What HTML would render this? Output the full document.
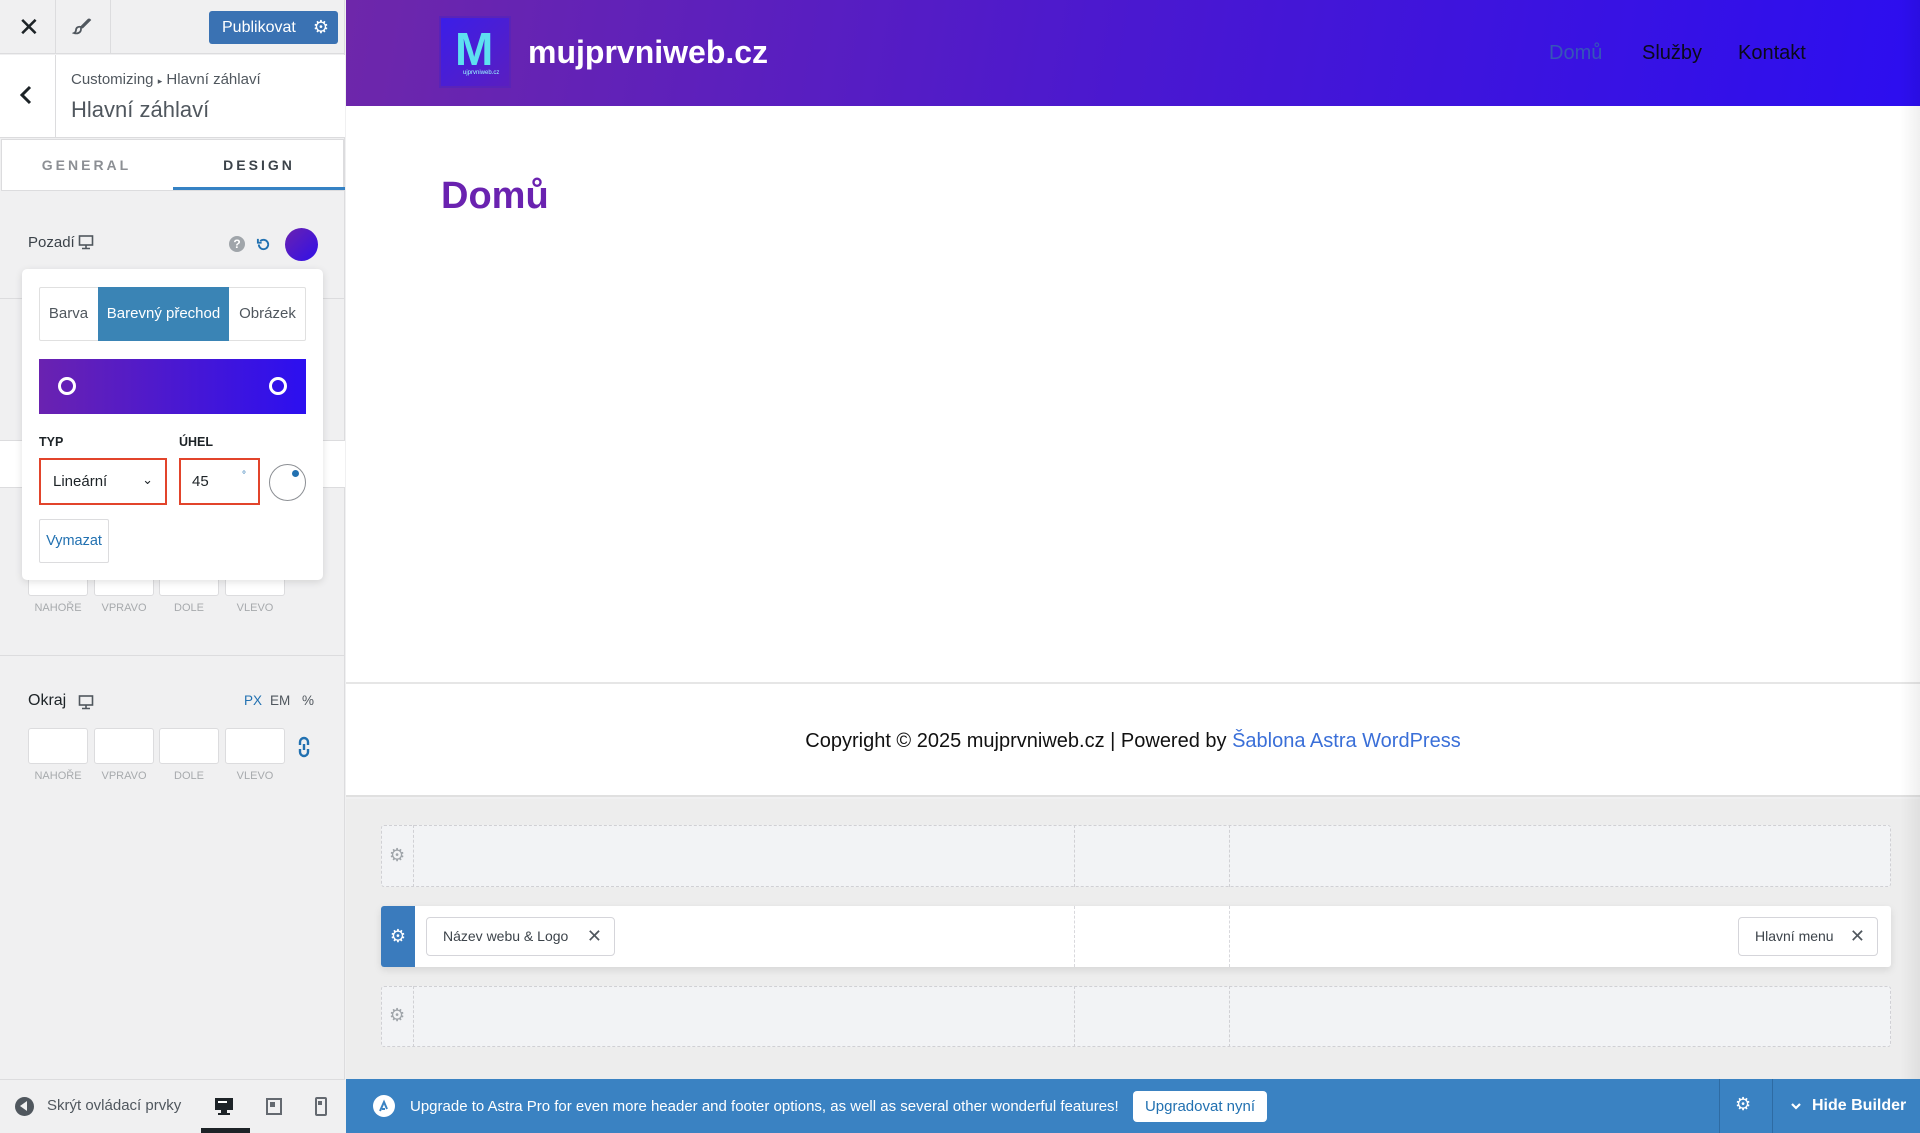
<!DOCTYPE html>
<html><head><meta charset="utf-8"><style>
*{box-sizing:border-box;margin:0;padding:0}
body{width:1920px;height:1133px;overflow:hidden;font-family:"Liberation Sans",sans-serif;background:#f0f0f1;position:relative;color:#1d2327}
.a{position:absolute}
.sb{left:0;top:0;width:345px;height:1133px;background:#f0f0f1;border-right:1px solid #dcdcde}
.inp{background:#fff;border:1px solid #dcdcde;border-radius:3px}
.lbl{font-size:11px;color:#a7aaad;text-align:center}
.row{border:1px dashed #d0d0d4;background:#f2f3f5;border-radius:3px}
.gear{color:#a0a5aa;font-size:18px}
</style></head><body>
<div class="a sb">
 <div class="a" style="left:0;top:0;width:345px;height:54px;border-bottom:1px solid #dcdcde"></div>
 <div class="a" style="left:55px;top:0;width:1px;height:54px;background:#dcdcde"></div>
 <div class="a" style="left:110px;top:0;width:1px;height:54px;background:#dcdcde"></div>
 <div class="a" style="left:18px;top:12px;font-size:26px;color:#1d2327">✕</div>
 <svg class="a" style="left:72px;top:16px" width="20" height="20" viewBox="0 0 20 20"><path d="M17 3 L9 11 M9 11 C6 10 4 12 4 14 C4 16 2 17 2 17 C5 18 9 17 9 13 Z M17 3 L18 4 L10 12" fill="none" stroke="#50575e" stroke-width="1.8"/></svg>
 <div class="a" style="left:209px;top:11px;width:129px;height:33px;background:#3a72b3;border-radius:3px;color:#fff;font-size:16px;line-height:33px;padding-left:13px">Publikovat<span style="position:absolute;right:9px;top:0;font-size:18px">⚙</span></div>
 <div class="a" style="left:0;top:55px;width:345px;height:83px;background:#fff;border-bottom:1px solid #dcdcde"></div>
 <div class="a" style="left:55px;top:55px;width:1px;height:83px;background:#dcdcde"></div>
 <svg class="a" style="left:19px;top:85px" width="14" height="20" viewBox="0 0 14 20"><path d="M11 2 L3 10 L11 18" fill="none" stroke="#1d2327" stroke-width="3"/></svg>
 <div class="a" style="left:71px;top:71px;font-size:15px;color:#50575e">Customizing <span style="font-size:9px">▸</span> Hlavní záhlaví</div>
 <div class="a" style="left:71px;top:97px;font-size:22px;color:#50575e">Hlavní záhlaví</div>
 <div class="a" style="left:1px;top:139px;width:343px;height:52px;background:#fff;border:1px solid #dcdcde"></div>
 <div class="a" style="left:0;top:157px;width:173px;text-align:center;font-size:14px;letter-spacing:3px;color:#8c8f94;font-weight:bold">GENERAL</div>
 <div class="a" style="left:173px;top:157px;width:172px;text-align:center;font-size:14px;letter-spacing:3px;color:#3c434a;font-weight:bold">DESIGN</div>
 <div class="a" style="left:173px;top:187px;width:172px;height:3px;background:#3582c4"></div>
 <div class="a" style="left:28px;top:234px;font-size:15px;color:#3c434a">Pozadí</div>
 <svg class="a" style="left:78px;top:234px" width="16" height="16" viewBox="0 0 16 16"><rect x="1.5" y="2" width="13" height="9" fill="none" stroke="#50575e" stroke-width="1.6"/><path d="M8 11v3M4 14.5h8" stroke="#50575e" stroke-width="1.6"/></svg>
 <div class="a" style="left:229px;top:236px;width:16px;height:16px;border-radius:50%;background:#a0a5aa;color:#fff;font-size:12px;font-weight:bold;text-align:center;line-height:16px">?</div>
 <svg class="a" style="left:256px;top:237px" width="15" height="15" viewBox="0 0 16 16"><path d="M3 8a5 5 0 1 0 1.5-3.6" fill="none" stroke="#2271b1" stroke-width="2"/><path d="M2 2v4h4" fill="none" stroke="#2271b1" stroke-width="2"/></svg>
 <div class="a" style="left:285px;top:228px;width:33px;height:33px;border-radius:50%;background:linear-gradient(135deg,#6a22b0,#3010e8)"></div>
 <div class="a" style="left:0;top:298px;width:345px;height:1px;background:#dcdcde"></div>
 <div class="a" style="left:0;top:440px;width:345px;height:48px;background:#fff;border-top:1px solid #dcdcde;border-bottom:1px solid #dcdcde"></div>
 <div class="a inp" style="left:28px;top:560px;width:60px;height:36px"></div>
 <div class="a inp" style="left:94px;top:560px;width:60px;height:36px"></div>
 <div class="a inp" style="left:159px;top:560px;width:60px;height:36px"></div>
 <div class="a inp" style="left:225px;top:560px;width:60px;height:36px"></div>
 <div class="a lbl" style="left:28px;top:602px;width:60px">NAHOŘE</div>
 <div class="a lbl" style="left:94px;top:602px;width:60px">VPRAVO</div>
 <div class="a lbl" style="left:159px;top:602px;width:60px">DOLE</div>
 <div class="a lbl" style="left:225px;top:602px;width:60px">VLEVO</div>
 <div class="a" style="left:0;top:655px;width:345px;height:1px;background:#dcdcde"></div>
 <div class="a" style="left:28px;top:692px;font-size:16px;color:#1d2327">Okraj</div>
 <svg class="a" style="left:78px;top:694px" width="16" height="16" viewBox="0 0 16 16"><rect x="1.5" y="2" width="13" height="9" fill="none" stroke="#50575e" stroke-width="1.6"/><path d="M8 11v3M4 14.5h8" stroke="#50575e" stroke-width="1.6"/></svg>
 <div class="a" style="left:244px;top:693px;font-size:13.5px;color:#2271b1">PX</div>
 <div class="a" style="left:270px;top:693px;font-size:13.5px;color:#50575e">EM</div>
 <div class="a" style="left:302px;top:693px;font-size:13.5px;color:#50575e">%</div>
 <div class="a inp" style="left:28px;top:728px;width:60px;height:36px"></div>
 <div class="a inp" style="left:94px;top:728px;width:60px;height:36px"></div>
 <div class="a inp" style="left:159px;top:728px;width:60px;height:36px"></div>
 <div class="a inp" style="left:225px;top:728px;width:60px;height:36px"></div>
 <svg class="a" style="left:297px;top:736px" width="14" height="22" viewBox="0 0 14 22"><path d="M3 9V6a4 4 0 0 1 8 0v3M3 13v3a4 4 0 0 0 8 0v-3M7 8v6" fill="none" stroke="#2271b1" stroke-width="2.4"/></svg>
 <div class="a lbl" style="left:28px;top:770px;width:60px">NAHOŘE</div>
 <div class="a lbl" style="left:94px;top:770px;width:60px">VPRAVO</div>
 <div class="a lbl" style="left:159px;top:770px;width:60px">DOLE</div>
 <div class="a lbl" style="left:225px;top:770px;width:60px">VLEVO</div>
 <div class="a" style="left:22px;top:269px;width:301px;height:311px;background:#fff;border-radius:5px;box-shadow:0 2px 8px rgba(0,0,0,.12)">
  <div class="a" style="left:17px;top:18px;width:267px;height:54px;border:1px solid #e0e0e0;border-radius:2px"></div>
  <div class="a" style="left:17px;top:18px;width:59px;height:54px;text-align:center;line-height:54px;font-size:15px;color:#50575e">Barva</div>
  <div class="a" style="left:76px;top:18px;width:131px;height:54px;background:#3a84b5;text-align:center;line-height:54px;font-size:15px;color:#fff">Barevný přechod</div>
  <div class="a" style="left:207px;top:18px;width:77px;height:54px;text-align:center;line-height:54px;font-size:15px;color:#50575e">Obrázek</div>
  <div class="a" style="left:17px;top:90px;width:267px;height:55px;background:linear-gradient(90deg,#6a22b0,#2c0ff0)"></div>
  <div class="a" style="left:36px;top:108px;width:18px;height:18px;border:3px solid #fff;border-radius:50%"></div>
  <div class="a" style="left:247px;top:108px;width:18px;height:18px;border:3px solid #fff;border-radius:50%"></div>
  <div class="a" style="left:17px;top:166px;font-size:12.5px;font-weight:bold">TYP</div>
  <div class="a" style="left:157px;top:166px;font-size:12.5px;font-weight:bold">ÚHEL</div>
  <div class="a" style="left:17px;top:189px;width:128px;height:47px;border:2px solid #e2442b;font-size:15px;line-height:43px;padding-left:12px">Lineární<span style="position:absolute;right:12px;top:-2px;font-size:13px">⌄</span></div>
  <div class="a" style="left:157px;top:189px;width:81px;height:47px;border:2px solid #e2442b;font-size:15px;line-height:43px;padding-left:11px">45<span style="position:absolute;left:61px;top:-6px;font-size:10px;color:#2271b1">°</span></div>
  <div class="a" style="left:247px;top:195px;width:37px;height:37px;border:1px solid #8c8f94;border-radius:50%"></div>
  <div class="a" style="left:270px;top:201px;width:7px;height:7px;background:#2271b1;border-radius:50%"></div>
  <div class="a" style="left:17px;top:250px;width:70px;height:44px;border:1px solid #dcdcde;border-radius:2px;color:#2271b1;font-size:14.5px;text-align:center;line-height:42px">Vymazat</div>
 </div>
 <div class="a" style="left:0;top:1079px;width:345px;height:54px;border-top:1px solid #dcdcde;background:#f0f0f1"></div>
 <div class="a" style="left:15px;top:1097px;width:19px;height:19px;border-radius:50%;background:#50575e"></div>
 <div class="a" style="left:20px;top:1101px;width:0;height:0;border-top:5px solid transparent;border-bottom:5px solid transparent;border-right:7px solid #f0f0f1"></div>
 <div class="a" style="left:47px;top:1097px;font-size:15px;color:#50575e">Skrýt ovládací prvky</div>
 <svg class="a" style="left:214px;top:1096px" width="20" height="20" viewBox="0 0 20 20"><rect x="1" y="2" width="18" height="12" fill="#1d2327"/><rect x="4" y="5" width="9" height="2" fill="#fff"/><rect x="7" y="14" width="6" height="3" fill="#1d2327"/><rect x="4" y="17" width="12" height="2" fill="#1d2327"/></svg>
 <div class="a" style="left:201px;top:1128px;width:49px;height:5px;background:#1d2327"></div>
 <div class="a" style="left:266px;top:1098px;width:16px;height:17px;border:2px solid #646970"></div>
 <div class="a" style="left:270px;top:1102px;width:5px;height:5px;background:#646970"></div>
 <div class="a" style="left:315px;top:1097px;width:12px;height:19px;border:2px solid #646970;border-radius:2px"></div>
 <div class="a" style="left:318px;top:1101px;width:4px;height:4px;background:#646970"></div>
</div>
<div class="a" style="left:346px;top:0;width:1574px;height:106px;background:linear-gradient(100deg,#6e27aa 0%,#4a18d0 50%,#2c0ef0 100%)"></div>
<div class="a" style="left:441px;top:18px;width:68px;height:68px;background:linear-gradient(135deg,#3b1ee8,#5a1ec0);box-shadow:0 0 0 2px #5a23b8"></div>
<div class="a" style="left:455px;top:24px;font-size:46px;font-weight:bold;color:#5ee0f0;line-height:50px">M</div>
<div class="a" style="left:463px;top:70px;font-size:6px;color:#9ff">ujprvniweb.cz</div>
<div class="a" style="left:528px;top:34px;font-size:32px;font-weight:bold;color:#fff">mujprvniweb.cz</div>
<div class="a" style="left:1549px;top:42px;font-size:20px;color:#3656b8">Domů</div>
<div class="a" style="left:1642px;top:42px;font-size:20px;color:#0a0a1a">Služby</div>
<div class="a" style="left:1738px;top:42px;font-size:20px;color:#0a0a1a">Kontakt</div>
<div class="a" style="left:346px;top:106px;width:1574px;height:576px;background:#fff"></div>
<div class="a" style="left:441px;top:175px;font-size:38px;font-weight:bold;color:#6a22b0">Domů</div>
<div class="a" style="left:346px;top:682px;width:1574px;height:2px;background:#e6e6e6"></div>
<div class="a" style="left:346px;top:684px;width:1574px;height:113px;background:#fff;border-bottom:2px solid #e0e0e0"></div>
<div class="a" style="left:346px;top:730px;width:1574px;text-align:center;font-size:20px;color:#111">Copyright © 2025 mujprvniweb.cz | Powered by <span style="color:#3a6fd8">Šablona Astra WordPress</span></div>
<div class="a" style="left:346px;top:799px;width:1574px;height:280px;background:#ededed"></div>
<div class="a" style="left:1900px;top:0;width:20px;height:1079px;background:linear-gradient(90deg,rgba(0,0,0,0),rgba(0,0,0,.06))"></div>
<div class="a row" style="left:381px;top:825px;width:1510px;height:62px"></div>
<div class="a row" style="left:381px;top:986px;width:1510px;height:61px"></div>
<div class="a" style="left:413px;top:825px;height:62px;border-left:1px dashed #d0d0d4"></div>
<div class="a" style="left:413px;top:986px;height:61px;border-left:1px dashed #d0d0d4"></div>
<div class="a" style="left:1074px;top:825px;height:62px;border-left:1px dashed #d0d0d4"></div>
<div class="a" style="left:1229px;top:825px;height:62px;border-left:1px dashed #d0d0d4"></div>
<div class="a" style="left:1074px;top:986px;height:61px;border-left:1px dashed #d0d0d4"></div>
<div class="a" style="left:1229px;top:986px;height:61px;border-left:1px dashed #d0d0d4"></div>
<div class="a gear" style="left:389px;top:845px">⚙</div>
<div class="a gear" style="left:389px;top:1005px">⚙</div>
<div class="a" style="left:381px;top:906px;width:1510px;height:61px;background:#fff;border-radius:3px;box-shadow:0 3px 8px rgba(0,0,0,.1)"></div>
<div class="a" style="left:381px;top:906px;width:34px;height:61px;background:#3a7bbd;border-radius:3px 0 0 3px;color:#fff;font-size:18px;text-align:center;line-height:61px">⚙</div>
<div class="a" style="left:1074px;top:906px;height:61px;border-left:1px dashed #d8d8dc"></div>
<div class="a" style="left:1229px;top:906px;height:61px;border-left:1px dashed #d8d8dc"></div>
<div class="a" style="left:426px;top:917px;width:189px;height:39px;border:1px solid #d5d5da;border-radius:4px;font-size:14px;line-height:37px;padding-left:16px;color:#3c434a">Název webu &amp; Logo<span style="position:absolute;right:12px;top:0;font-size:18px;color:#50575e">✕</span></div>
<div class="a" style="left:1738px;top:917px;width:140px;height:39px;border:1px solid #d5d5da;border-radius:4px;font-size:14px;line-height:37px;padding-left:16px;color:#3c434a">Hlavní menu<span style="position:absolute;right:12px;top:0;font-size:18px;color:#50575e">✕</span></div>
<div class="a" style="left:346px;top:1079px;width:1574px;height:54px;background:#3a82c2"></div>
<div class="a" style="left:373px;top:1095px;width:22px;height:22px;border-radius:50%;background:#fff"></div>
<svg class="a" style="left:377px;top:1099px" width="14" height="14" viewBox="0 0 14 14"><path d="M3 12 L7 3 L10 10 M5 10 L8 10" fill="none" stroke="#3a82c2" stroke-width="2"/></svg>
<div class="a" style="left:410px;top:1098px;font-size:15px;color:#fff;white-space:nowrap">Upgrade to Astra Pro for even more header and footer options, as well as several other wonderful features!</div>
<div class="a" style="left:1133px;top:1091px;width:134px;height:31px;background:#fff;border-radius:4px;color:#2271b1;font-size:15px;text-align:center;line-height:31px">Upgradovat nyní</div>
<div class="a" style="left:1719px;top:1079px;width:1px;height:54px;background:#2e6ba3"></div>
<div class="a" style="left:1772px;top:1079px;width:1px;height:54px;background:#2e6ba3"></div>
<div class="a" style="left:1735px;top:1094px;font-size:18px;color:#fff">⚙</div>
<svg class="a" style="left:1790px;top:1101px" width="12" height="10" viewBox="0 0 12 10"><path d="M2 3 L6 7 L10 3" fill="none" stroke="#fff" stroke-width="2.2"/></svg>
<div class="a" style="left:1812px;top:1097px;font-size:16px;font-weight:bold;color:#fff">Hide Builder</div>
</body></html>
